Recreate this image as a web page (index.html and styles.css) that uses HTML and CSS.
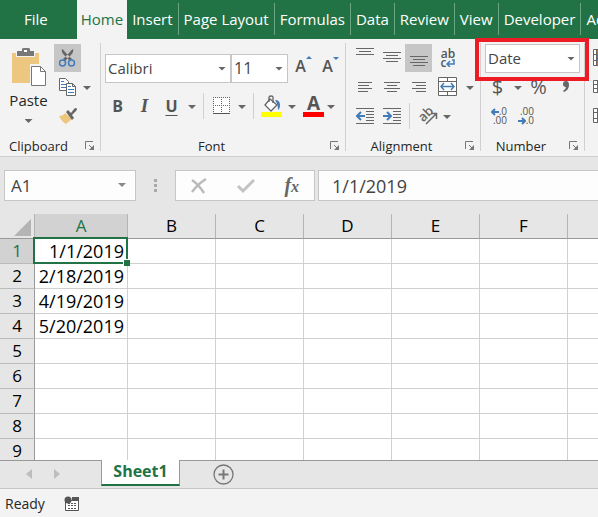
FILE: index.html
```html
<!DOCTYPE html>
<html lang="en">
<head>
<meta charset="utf-8">
<title>Sheet1</title>
<link rel="stylesheet" href="styles.css">
</head>
<body>
<nav class="tabs">
  <a class="tab file" href="#file">File</a>
  <a class="tab home" href="#home">Home</a>
  <a class="tab" href="#insert">Insert</a>
  <a class="tab" href="#layout">Page Layout</a>
  <a class="tab" href="#formulas">Formulas</a>
  <a class="tab" href="#data">Data</a>
  <a class="tab" href="#review">Review</a>
  <a class="tab" href="#view">View</a>
  <a class="tab" href="#developer">Developer</a>
  <a class="tab" href="#addins">Add-ins</a>
</nav>

<div class="ribbon">
  <section class="group clipboard">
    <div class="tools split">
      <button class="paste" type="button">
        <svg width="36" height="40" viewBox="0 0 36 40"><path fill="#edc67f" d="M1 5h27v30H1z"/><path fill="#f3f3f3" d="M5 4h19v5H5z"/><path fill="#777" d="M6 3h5V1q0-1 2-1h4q2 0 2 1v2h4v5H6z"/><path fill="#fff" d="M13 2h3v2h-3z"/><path fill="#f3f3f3" d="M19 16h17v23H19z"/><path fill="#fff" stroke="#777" d="M20.500 18.500h9l5 5v14h-14z"/><path fill="none" stroke="#777" d="M29.500 18.500v5h5"/></svg>
        <span>Paste</span><i class="arrow"></i>
      </button>
      <div class="stack">
        <div class="row"><button class="tool on" type="button" aria-label="Cut"><svg width="18" height="20" viewBox="0 0 18 20"><path fill="#666" d="M3 1q2 1 3 3l7 7-2 2-6-6Q2 4 3 1zM14 1q-2 1-3 3l-7 7 2 2 6-6q3-3 2-6z"/><circle cx="3.500" cy="15" r="3" fill="none" stroke="#417cb9" stroke-width="1.500"/><circle cx="12.500" cy="15" r="3" fill="none" stroke="#417cb9" stroke-width="1.500"/></svg></button></div>
        <div class="row"><button class="tool" type="button" aria-label="Copy"><svg width="18" height="20" viewBox="0 0 18 20"><path fill="#fff" stroke="#666" d="M.5 1.500h6l3 3v9h-9z"/><path stroke="#417cb9" d="M2 4.500h3M2 7.500h5M2 10.500h5"/><path fill="#fff" stroke="#666" d="M7.500 6.500h6l3 3v9h-9zM13.500 6.500v3h3"/><path stroke="#417cb9" d="M9 9.500h3M9 12.500h6M9 15.500h6"/></svg></button><button class="drop" type="button" aria-label="Copy options"><i class="arrow"></i></button></div>
        <div class="row"><button class="tool" type="button" aria-label="Format Painter"><svg width="18" height="18" viewBox="0 0 18 18"><path fill="#edc67f" d="M0 9q4 0 6-3l7 6-6 5Q2 14 0 9z"/><path fill="#666" d="M7 5l2-2 3 3 3-4q2-2 3 0 0 1-1 2l-4 4 2 3-2 2z"/></svg></button></div>
      </div>
    </div>
    <footer><span>Clipboard</span><button class="launch" type="button" aria-label="Clipboard settings"><svg width="10" height="10" viewBox="0 0 10 10"><path fill="none" stroke="#777" d="M.5 8V.5H8M4 4l4 4"/><path fill="#777" d="M9 4v5H4z"/></svg></button></footer>
  </section>

  <section class="group font">
    <div class="tools">
      <div class="row combos">
        <label class="combo family"><select aria-label="Font"><option>Calibri</option></select></label>
        <label class="combo size"><select aria-label="Font size"><option>11</option></select></label>
        <button class="tool grow" type="button" aria-label="Increase font size"><span class="letter">A</span><svg width="6" height="22" viewBox="0 0 6 22"><path fill="#417cb9" d="M0 5l3-3 3 3z"/></svg></button>
        <button class="tool grow" type="button" aria-label="Decrease font size"><span class="letter">A</span><svg width="6" height="22" viewBox="0 0 6 22"><path fill="#417cb9" d="M0 3h6l-3 3z"/></svg></button>
      </div>
      <div class="row">
        <button class="tool bold" type="button">B</button>
        <button class="tool italic" type="button">I</button>
        <button class="tool under" type="button">U</button>
        <button class="drop" type="button" aria-label="Underline options"><i class="arrow"></i></button>
        <span class="bar"></span>
        <button class="tool" type="button" aria-label="Borders"><svg width="18" height="18" viewBox="0 0 18 18"><path fill="#fff" d="M1 1h16v15H1z"/><path fill="none" stroke="#666" stroke-dasharray="1 1" d="M0 .5h18M0 8.500h18M.5 0v17M8.500 0v17M16.500 0v17"/><path stroke="#555" d="M0 16.500h17"/></svg></button>
        <button class="drop" type="button" aria-label="Border options"><i class="arrow"></i></button>
        <span class="bar"></span>
        <button class="tool" type="button" aria-label="Fill Color"><svg width="22" height="22" viewBox="0 0 22 22"><path fill="#fff" stroke="#666" stroke-width="1.300" d="M9 4l7 6-6 6-6-6z"/><path fill="none" stroke="#666" stroke-width="1.300" d="M8 7V2q0-1 2-1t2 1v6"/><path fill="#417cb9" d="M14 5q5 0 5 5 0 4-2 5 0-6-3-10z"/><path fill="#ff0" d="M0 17h21v5H0z"/></svg></button>
        <button class="drop" type="button" aria-label="Fill options"><i class="arrow"></i></button>
        <button class="tool color" type="button" aria-label="Font Color">A</button>
        <button class="drop" type="button" aria-label="Font color options"><i class="arrow"></i></button>
      </div>
    </div>
    <footer><span>Font</span><button class="launch" type="button" aria-label="Font settings"><svg width="10" height="10" viewBox="0 0 10 10"><path fill="none" stroke="#777" d="M.5 8V.5H8M4 4l4 4"/><path fill="#777" d="M9 4v5H4z"/></svg></button></footer>
  </section>

  <section class="group align">
    <div class="tools stack">
      <div class="row">
        <button class="tool" type="button" aria-label="Top Align"><svg width="18" height="20" viewBox="0 0 18 20"><path stroke="#666" d="M0 .5h18M3 3.500h12M0 6.500h18"/></svg></button>
        <button class="tool" type="button" aria-label="Middle Align"><svg width="18" height="20" viewBox="0 0 18 20"><path stroke="#666" d="M0 4.500h18M3 7.500h12M0 10.500h18M3 13.500h12"/></svg></button>
        <button class="tool on" type="button" aria-label="Bottom Align"><svg width="18" height="20" viewBox="0 0 18 20"><path stroke="#666" d="M0 8.500h18M3 11.500h12M0 14.500h18M3 17.500h12"/></svg></button>
        <button class="tool wide wrap" type="button" aria-label="Wrap Text"><span>ab</span><span>c<svg width="9" height="8" viewBox="0 0 9 8"><path fill="none" stroke="#417cb9" stroke-width="1.500" d="M6 1h2v4H2M4 2L1 5l3 3"/></svg></span></button>
      </div>
      <div class="row">
        <button class="tool" type="button" aria-label="Align Left"><svg width="16" height="12" viewBox="0 0 16 12"><path stroke="#666" d="M1 1.500h14M1 4.500h11M1 7.500h14M1 10.500h10"/></svg></button>
        <button class="tool" type="button" aria-label="Center"><svg width="16" height="12" viewBox="0 0 16 12"><path stroke="#666" d="M0 1.500h16M3 4.500h10M0 7.500h16M3 10.500h10"/></svg></button>
        <button class="tool" type="button" aria-label="Align Right"><svg width="16" height="12" viewBox="0 0 16 12"><path stroke="#666" d="M1 1.500h14M5 4.500h10M1 7.500h14M5 10.500h10"/></svg></button>
        <button class="tool wide" type="button" aria-label="Merge and Center"><svg width="20" height="20" viewBox="0 0 20 20"><path fill="#fff" stroke="#666" d="M.5.500h18v18H.5zM.5 4.500h18M.5 14.500h18M9.500.500v4M9.500 14.500v4"/><path fill="none" stroke="#417cb9" stroke-width="1.500" d="M3 9.500h13M6 6L3 9.500 6 13M13 6l3 3.500-3 3.500"/></svg></button>
        <button class="drop" type="button" aria-label="Merge options"><i class="arrow"></i></button>
      </div>
      <div class="row">
        <button class="tool" type="button" aria-label="Decrease Indent"><svg width="18" height="18" viewBox="0 0 18 18"><path stroke="#666" d="M0 1.500h18M10 4.500h8M10 7.500h8M10 10.500h8M10 13.500h8M0 16.500h18"/><path fill="none" stroke="#417cb9" stroke-width="2" d="M1 9h8M5 5L1 9l4 4"/></svg></button>
        <button class="tool" type="button" aria-label="Increase Indent"><svg width="18" height="18" viewBox="0 0 18 18"><path stroke="#666" d="M0 1.500h18M10 4.500h8M10 7.500h8M10 10.500h8M10 13.500h8M0 16.500h18"/><path fill="none" stroke="#417cb9" stroke-width="2" d="M0 9h8M4 5l4 4-4 4"/></svg></button>
        <span class="bar"></span>
        <button class="tool" type="button" aria-label="Orientation"><svg width="22" height="22" viewBox="0 0 22 22"><text x="-8" y="4" transform="translate(9 9) rotate(-45)" font-family="Open Sans" font-size="13" font-weight="600" fill="#666">ab</text><path fill="none" stroke="#666" stroke-width="1.500" d="M9 19L19 9M14 8.500h5.500V14"/></svg></button>
        <button class="drop" type="button" aria-label="Orientation options"><i class="arrow"></i></button>
      </div>
    </div>
    <footer><span>Alignment</span><button class="launch" type="button" aria-label="Alignment settings"><svg width="10" height="10" viewBox="0 0 10 10"><path fill="none" stroke="#777" d="M.5 8V.5H8M4 4l4 4"/><path fill="#777" d="M9 4v5H4z"/></svg></button></footer>
  </section>

  <section class="group number">
    <div class="tools stack">
      <div class="row"><label class="combo format"><select aria-label="Number format"><option>Date</option></select></label></div>
      <div class="row symbols">
        <button class="tool" type="button">$</button>
        <button class="drop" type="button" aria-label="Currency options"><i class="arrow"></i></button>
        <button class="tool" type="button">%</button>
        <button class="tool" type="button" aria-label="Comma Style"><svg width="8" height="14" viewBox="0 0 8 14"><path fill="#666" d="M4 1q3 0 3 4 0 5-5 7l-1-1q3-2 3-4-3 0-3-3t3-3z"/></svg></button>
      </div>
      <div class="row">
        <button class="tool decimal" type="button" aria-label="Increase Decimal"><span><svg width="8" height="8" viewBox="0 0 8 8"><path fill="none" stroke="#417cb9" stroke-width="2" d="M1 4h7M4 1L1 4l3 3"/></svg>.0</span><span>.00</span></button>
        <button class="tool decimal" type="button" aria-label="Decrease Decimal"><span>.00</span><span><svg width="8" height="8" viewBox="0 0 8 8"><path fill="none" stroke="#417cb9" stroke-width="2" d="M0 4h7M4 1l3 3-3 3"/></svg>.0</span></button>
      </div>
    </div>
    <footer><span>Number</span><button class="launch" type="button" aria-label="Number settings"><svg width="10" height="10" viewBox="0 0 10 10"><path fill="none" stroke="#777" d="M.5 8V.5H8M4 4l4 4"/><path fill="#777" d="M9 4v5H4z"/></svg></button></footer>
    <div class="highlight"></div>
  </section>

  <section class="group styles">
    <div class="tools stack">
      <div class="row"><button class="tool" type="button" aria-label="Conditional Formatting"><svg width="18" height="18" viewBox="0 0 18 18"><path fill="#fff" stroke="#666" d="M.5.500h17v16H.5zM.5 5.500h17M.5 11.500h17M3.500.500v16"/><path fill="#d9663b" d="M4 1h6v4H4zM4 12h6v4H4z"/><path fill="#417cb9" d="M4 6h6v5H4z"/></svg></button></div>
      <div class="row"><button class="tool" type="button" aria-label="Format as Table"><svg width="18" height="14" viewBox="0 0 18 14"><path fill="#fff" stroke="#666" d="M.5.500h17v12H.5zM.5 4.500h17M.5 8.500h17M4.500.500v12"/></svg></button></div>
      <div class="row"><button class="tool" type="button" aria-label="Cell Styles"><svg width="18" height="16" viewBox="0 0 18 16"><path fill="#fff" stroke="#666" d="M.5.500h17v14H.5zM.5 4.500h17M.5 10.500h17M4.500.500v14"/></svg></button></div>
    </div>
  </section>
</div>

<div class="formula">
  <label class="combo name"><select aria-label="Name box"><option>A1</option></select></label>
  <span class="dots"><i></i><i></i><i></i></span>
  <div class="entry">
    <button type="button" aria-label="Cancel"><svg width="16" height="16" viewBox="0 0 16 16"><path fill="none" stroke="#bbb" stroke-width="2.500" d="M1 2q7 5 12 13M15 1Q7 6 1 14"/></svg></button>
    <button type="button" aria-label="Enter"><svg width="18" height="16" viewBox="0 0 18 16"><path fill="none" stroke="#c3c3c3" stroke-width="3" d="M1 8l5 5L17 2"/></svg></button>
    <button class="fx" type="button" aria-label="Insert Function">f<span>x</span></button>
  </div>
  <input class="value" aria-label="Formula" value="1/1/2019">
</div>

<main class="sheet">
  <table>
    <colgroup><col class="c-head"><col class="c-a"><col class="c"><col class="c"><col class="c"><col class="c"><col class="c"><col></colgroup>
    <thead><tr><th class="corner"><svg width="17" height="17" viewBox="0 0 17 17"><path fill="#b4b4b4" d="M17 0v17H0z"/></svg></th><th class="active">A</th><th>B</th><th>C</th><th>D</th><th>E</th><th>F</th><th></th></tr></thead>
    <tbody>
      <tr><th class="active">1</th><td class="selected">1/1/2019</td><td></td><td></td><td></td><td></td><td></td><td></td></tr>
      <tr><th>2</th><td>2/18/2019</td><td></td><td></td><td></td><td></td><td></td><td></td></tr>
      <tr><th>3</th><td>4/19/2019</td><td></td><td></td><td></td><td></td><td></td><td></td></tr>
      <tr><th>4</th><td>5/20/2019</td><td></td><td></td><td></td><td></td><td></td><td></td></tr>
      <tr><th>5</th><td></td><td></td><td></td><td></td><td></td><td></td><td></td></tr>
      <tr><th>6</th><td></td><td></td><td></td><td></td><td></td><td></td><td></td></tr>
      <tr><th>7</th><td></td><td></td><td></td><td></td><td></td><td></td><td></td></tr>
      <tr><th>8</th><td></td><td></td><td></td><td></td><td></td><td></td><td></td></tr>
      <tr><th>9</th><td></td><td></td><td></td><td></td><td></td><td></td><td></td></tr>
    </tbody>
  </table>
</main>

<div class="sheetbar">
  <button class="step" type="button" aria-label="Previous sheet"><svg width="6" height="10" viewBox="0 0 6 10"><path fill="#bdbdbd" d="M6 0v10L0 5z"/></svg></button>
  <button class="step" type="button" aria-label="Next sheet"><svg width="6" height="10" viewBox="0 0 6 10"><path fill="#bdbdbd" d="M0 0v10l6-5z"/></svg></button>
  <a class="sheet-tab" href="#sheet1">Sheet1</a>
  <button class="add" type="button" aria-label="New sheet"><svg width="21" height="21" viewBox="0 0 21 21"><circle cx="10.500" cy="10.500" r="9.500" fill="none" stroke="#777" stroke-width="1.300"/><path stroke="#777" stroke-width="2" d="M5.500 10.500h10M10.500 5.500v10"/></svg></button>
</div>

<footer class="status">
  <span>Ready</span>
  <button type="button" aria-label="Record macro"><svg width="16" height="16" viewBox="0 0 16 16"><path fill="#fff" stroke="#555" d="M1.500 4.500h13v10h-13z"/><path fill="#555" d="M8 1h7v4H8z"/><circle cx="4" cy="4" r="3.500" fill="#555"/><path stroke="#555" stroke-dasharray="2 1" d="M4 7.500h9M4 9.500h9M4 12.500h9"/></svg></button>
</footer>
</body>
</html>
```
FILE: styles.css
```css
* { box-sizing: border-box; }
body {
  margin: 0;
  height: 100vh;
  display: flex;
  flex-direction: column;
  overflow: hidden;
  background: #e6e6e6;
  color: #262626;
  font: 15px/20px "Open Sans", "Noto Sans", sans-serif;
}
button, select, input { font: inherit; color: inherit; border: 0; margin: 0; padding: 0; background: none; }
svg { display: block; flex: none; }
a { text-decoration: none; color: inherit; }

.tabs { display: flex; flex: none; height: 39px; overflow: hidden; background: #217346; color: #fff; white-space: nowrap; }
.tab { flex: none; display: flex; align-items: center; padding: 0 5px; margin: 3px 0 4px; border-right: 1px solid #6ba583; }
.tab.file, .tab.home { margin: 0; border: 0; padding-bottom: 1px; }
.tab.file { padding-left: 24px; padding-right: 29px; }
.tab.home { padding: 0 4px 1px; background: #f3f3f3; color: #217346; }

.ribbon { display: flex; flex: none; height: 118px; background: #f3f3f3; border-bottom: 1px solid #d0d0d0; }
.group { position: relative; flex: none; display: flex; flex-direction: column; justify-content: space-between; padding: 5px 0 0 3px; }
.group::after { content: ""; position: absolute; right: 0; top: 4px; bottom: 5px; width: 1px; background: #d0d0d0; }
.clipboard { width: 101px; }
.font { width: 245px; }
.align { width: 135px; }
.number { width: 104px; }
.styles { flex: 1; min-width: 0; overflow: hidden; }
.group.styles::after { display: none; }
.group footer { display: flex; align-items: center; height: 20px; margin-left: -3px; font-size: 13px; }
.group footer span { flex: 1; text-align: center; }
.launch { width: 24px; padding-left: 8px; }
.split { display: flex; }
.stack { display: flex; flex-direction: column; gap: 1px; }
.row { display: flex; align-items: center; height: 28px; }
.tool { flex: none; display: flex; align-items: center; justify-content: center; width: 27px; height: 28px; color: #555; }
.tool.on { background: #c6c6c6; }
.wide { width: 32px; }
.drop { flex: none; display: flex; align-items: center; justify-content: center; width: 12px; height: 28px; }
.arrow { display: block; width: 8px; height: 4px; margin-top: 2px; background: #666; clip-path: polygon(0 0, 100% 0, 50% 100%); }
.bar { width: 1px; height: 26px; margin: 0 4px; background: #d0d0d0; }
.align .stack, .align .row { padding-left: 1px; }

.paste { width: 51px; display: flex; flex-direction: column; align-items: center; padding-top: 4px; }
.paste span { margin-top: 2px; }
.paste .arrow { margin-top: 9px; }

.combos { height: 48px; padding-left: 1px; }
.combo { position: relative; display: block; height: 29px; background: #fff; border: 1px solid #c6c6c6; }
.combo::after { content: ""; position: absolute; right: 4px; top: 12px; width: 8px; height: 4px; background: #666; clip-path: polygon(0 0, 100% 0, 50% 100%); pointer-events: none; }
.combo select { display: block; width: 100%; height: 27px; padding-left: 2px; appearance: none; color: #444; }
.family { width: 126px; }
.size { width: 57px; margin-right: 2px; }
.size select { font-size: 16px; }
.grow { align-items: flex-start; padding-top: 1px; }
.grow .letter { font-size: 16px; font-weight: 600; line-height: 22px; }
.grow svg { margin-top: -1px; }
.bold { font-size: 16px; font-weight: 700; }
.italic { font: italic 700 19px/20px "Liberation Serif", serif; }
.under { font-size: 16px; font-weight: 700; text-decoration: underline 1px; text-underline-offset: 3px; }
.font .row .drop { width: 14px; }
.color { width: 21px; height: 22px; margin-left: 4px; border-bottom: 5px solid #f00; font-size: 19px; line-height: 17px; font-weight: 700; }

.wrap, .decimal { flex-direction: column; font-size: 12px; line-height: 9px; font-weight: 600; }
.wrap span, .decimal span { display: flex; align-items: center; }
.decimal { align-items: flex-end; padding-right: 4px; font-size: 10px; font-weight: 400; }
.format { width: 95px; margin-left: 1px; }
.symbols { font-size: 20px; }
.symbols .drop { margin: 0 1px; }
.highlight { position: absolute; left: -6px; right: -4px; top: -1px; height: 43px; border: 4px solid #ed1c24; z-index: 2; pointer-events: none; }

.formula { flex: none; display: flex; height: 57px; padding: 13px 0 13px 4px; }
.formula .combo { height: 31px; background: #fdfdfd; }
.formula .name select { height: 29px; padding-left: 6px; font-size: 17px; }
.name { width: 132px; }
.formula .name::after { right: 9px; background: #888; }
.dots { width: 39px; display: flex; flex-direction: column; align-items: center; justify-content: center; gap: 2px; }
.dots i { width: 3px; height: 3px; background: #aaa; }
.entry { width: 140px; display: flex; justify-content: space-around; align-items: center; background: #fdfdfd; border: 1px solid #c6c6c6; }
.fx { color: #666; font: italic 700 20px/24px "Liberation Serif", serif; }
.fx span { font-size: 16px; }
.value { flex: 1; min-width: 0; margin-left: 3px; padding-left: 13px; background: #fdfdfd; border: 1px solid #c6c6c6; border-right: 0; font-size: 18px; color: #444; }

.sheet { flex: 1; min-height: 0; overflow: hidden; background: #fff; }
table { width: 100%; table-layout: fixed; border-collapse: separate; border-spacing: 0; color: #000; font-size: 18px; line-height: 24px; }
.c-head { width: 35px; }
.c-a { width: 93px; }
.c { width: 88px; }
th, td { height: 25px; padding: 0; border-right: 1px solid #d0d0d0; border-bottom: 1px solid #d0d0d0; }
th:last-child, td:last-child { border-right: 0; }
th { background: #e6e6e6; font-weight: 400; font-size: 17px; }
thead th { border-bottom-color: #999; border-right-color: #b4b4b4; }
tbody th { border-right-color: #999; border-bottom-color: #bbb; }
th.active { background: #d2d2d2; color: #217346; }
.corner svg { margin: 3px 0 0 14px; }
td { text-align: right; padding-right: 3px; white-space: nowrap; }
.selected { position: relative; }
.selected::before { content: ""; position: absolute; inset: -2px -1px -1px -2px; border: 2px solid #217346; }
.selected::after { content: ""; position: absolute; right: -3px; bottom: -3px; width: 6px; height: 6px; background: #217346; border: solid #fff; border-width: 1px 0 0 1px; }

.sheetbar { flex: none; display: flex; height: 29px; padding-left: 15px; border-bottom: 1px solid #c6c6c6; box-shadow: inset 0 1px #999; }
.step { width: 28px; display: flex; align-items: center; justify-content: center; }
.sheet-tab { width: 79px; height: 26px; margin-left: 30px; background: #fff; border: 1px solid #999; border-width: 0 1px 2px; border-bottom-color: #217346; color: #217346; font-size: 16px; font-weight: 700; text-align: center; line-height: 22px; }
.add { margin-left: 33px; padding-top: 1px; }

.status { flex: none; display: flex; align-items: center; gap: 19px; height: 28px; padding: 1px 0 0 5px; background: #f3f3f3; font-size: 14px; }
```
